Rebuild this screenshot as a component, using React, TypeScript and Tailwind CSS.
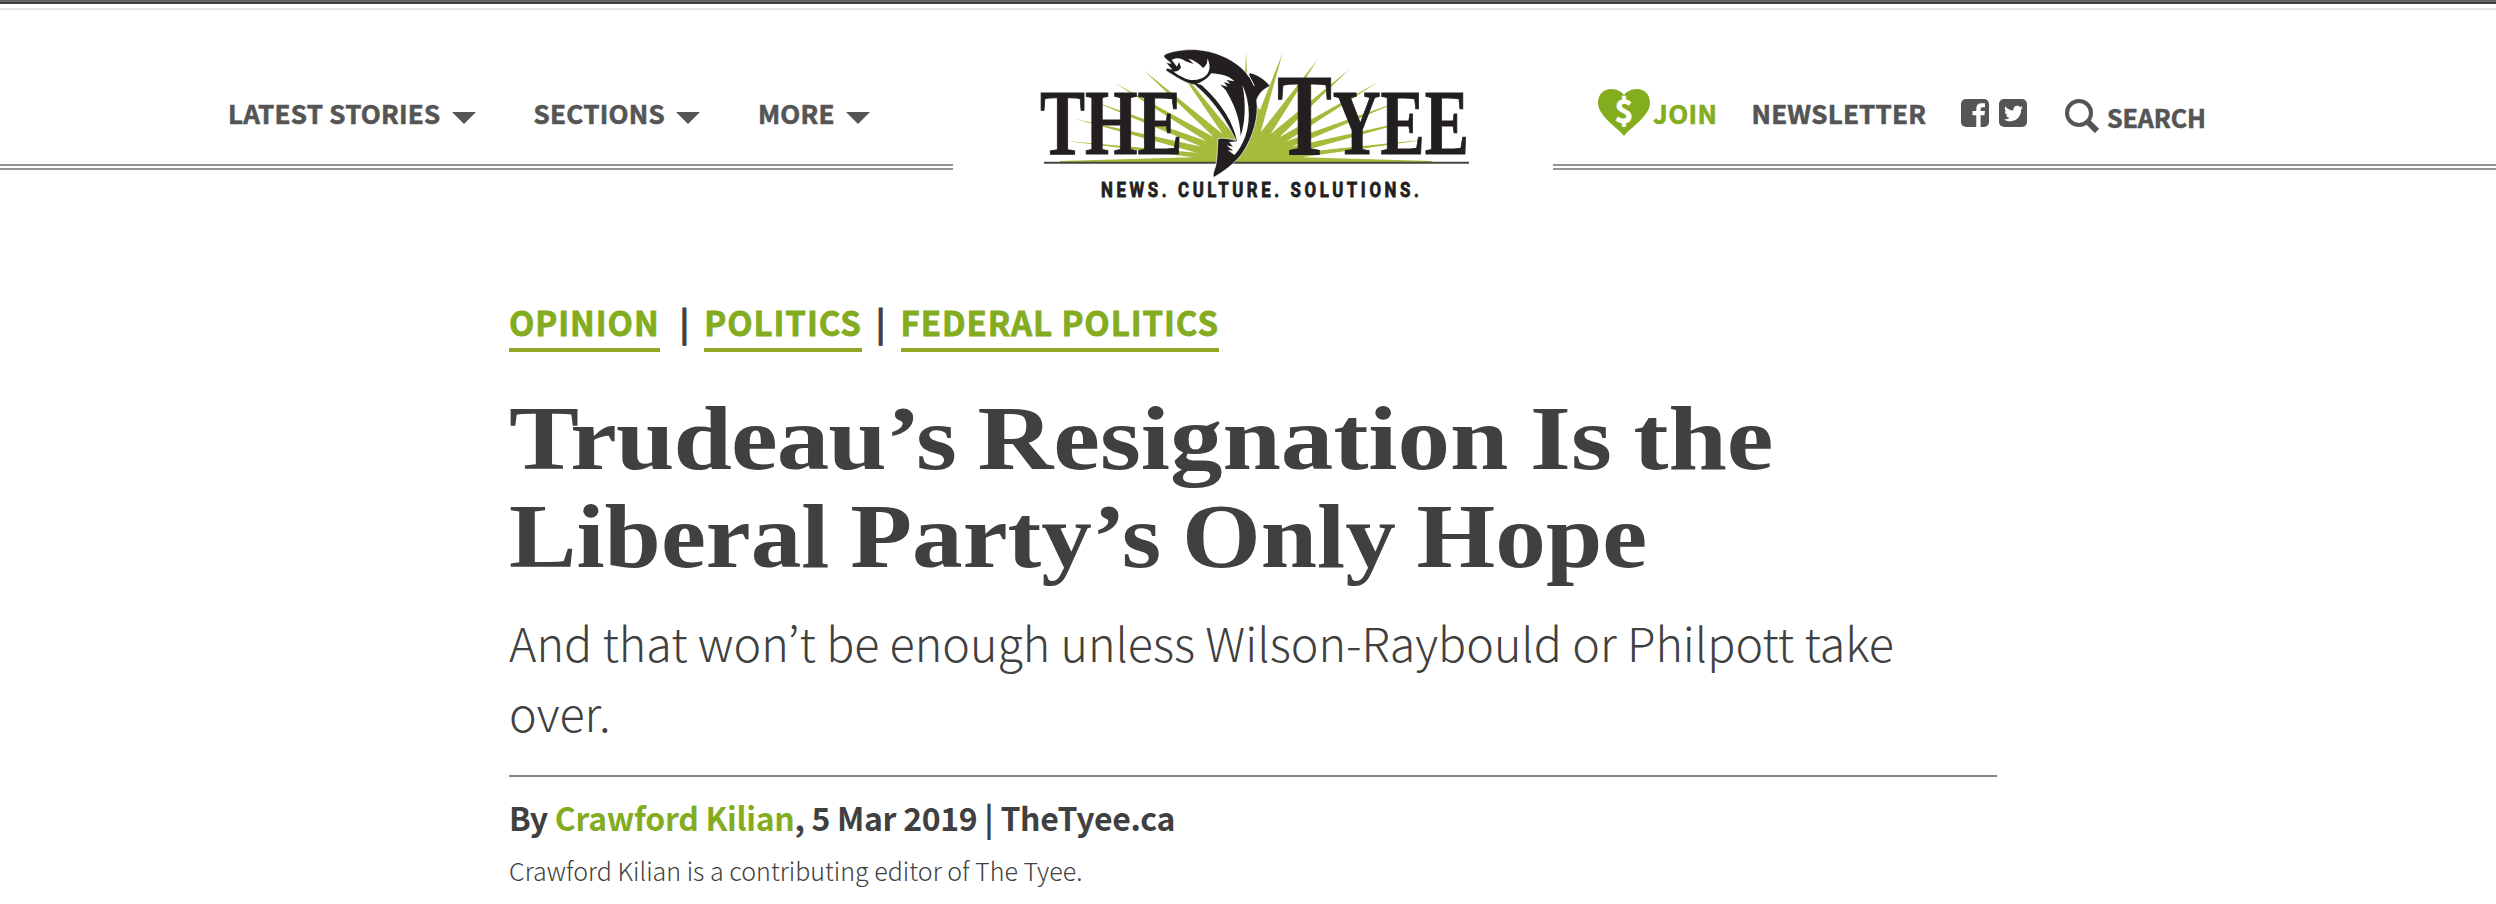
import React from 'react';
import { FaTwitter } from 'react-icons/fa';

const menus = ['LATEST STORIES', 'SECTIONS', 'MORE'];

const Logo = () => (
  <svg viewBox="60 45 1290 480" className="w-[430px] h-[160px] overflow-visible" aria-label="The Tyee">
    <path
      fill="#a4bb3c"
      d="M120 393L520 382L135 332L530 368L163 266L545 350L217 212L560 334L283 158L582 322L370 120L608 312L455 88L650 325L672 240L678 62L684 200L720 240L788 68L722 307L893 88L752 312L988 118L778 322L1073 157L800 334L1143 212L815 350L1195 266L830 368L1225 328L845 382L1235 393L1235 398L120 398Z"
    />
    <path d="M72 398.500H1347" stroke="#45453f" strokeWidth="6" />
    <g fontFamily="Liberation Serif, serif" fontWeight="700" fill="#231f20" stroke="#231f20" strokeWidth="3">
      <text x="60" y="371" fontSize="281" textLength="428" lengthAdjust="spacingAndGlyphs">THE</text>
      <text x="771" y="371" fontSize="352" textLength="165" lengthAdjust="spacingAndGlyphs">T</text>
      <text x="938" y="371" fontSize="281" textLength="409" lengthAdjust="spacingAndGlyphs">YEE</text>
    </g>
    <g transform="translate(405 30)">
      <path
        fill="#231f20"
        stroke="#fff"
        strokeWidth="2"
        d="M27 45C50 32 90 28 125 29C180 33 225 55 255 80C268 91 276 100 281 110L283 98C305 102 330 118 346 138C325 147 312 160 305 180C312 230 295 290 262 340C235 375 205 395 177 412C172 408 176 395 182 378C188 350 187 320 189 296C205 292 225 297 243 301C215 245 180 185 120 135C90 130 65 112 33 92L34 84L50 88L33 68L48 70L27 52Z"
      />
      <path
        fill="#fff"
        d="M50 60C62 52 78 52 92 64L116 72L100 56C118 60 132 70 144 84C152 80 158 70 157 55C167 75 166 92 154 106C140 120 112 124 92 116C76 110 62 100 54 94C64 96 74 92 78 82L72 66L66 80Z"
      />
      <path
        fill="#fff"
        d="M168 100C195 102 222 106 238 124L214 120L226 132L206 126L218 140L196 134L212 150C235 190 255 230 257 288C270 250 274 190 262 134C288 190 288 260 262 310C255 325 246 338 238 345L218 330L234 332L215 316L234 320L222 306L246 304C236 250 200 190 145 140C139 134 132 131 124 132C146 124 160 114 168 100Z"
      />
      <path d="M282 106C288 118 292 128 298 138" stroke="#fff" strokeWidth="3" fill="none" />
    </g>
    <g transform="translate(243 502) scale(0.8 1)">
      <text
        fontFamily="Roboto, sans-serif"
        fontWeight="700"
        fontSize="63"
        fill="#231f20"
        stroke="#231f20"
        strokeWidth="2.500"
        textLength="1192"
      >
        NEWS. CULTURE. SOLUTIONS.
      </text>
    </g>
  </svg>
);

const HeartIcon = () => (
  <svg viewBox="0 0 52 47" className="w-[52px] h-[47px]">
    <path fill="#83ac1f" d="M26 47C20 39 0 27 0 14C0 5 6 0 13 0C19 0 24 3 26 6C28 3 33 0 39 0C46 0 52 5 52 14C52 27 32 39 26 47Z" />
    <text x="26" y="34" textAnchor="middle" fontFamily="Noto Sans CJK KR, sans-serif" fontWeight="700" fontSize="32" fill="#fff" stroke="#fff" strokeWidth="0.600">
      $
    </text>
  </svg>
);

const FacebookIcon = () => (
  <svg viewBox="0 0 28 28" className="w-[28px] h-[28px]">
    <rect width="28" height="28" rx="5" fill="#555" />
    <path fill="#fff" d="M15.300 28V16.200H11.500V12H15.300V9.500C15.300 6 17.300 4.200 20.500 4.200H24V8.300H21.600C20.100 8.300 19.600 9 19.600 10.200V12H24L23.400 16.200H19.600V28Z" />
  </svg>
);

const SearchIcon = () => (
  <svg viewBox="0 0 34 34" className="w-[34px] h-[34px]" fill="none" stroke="#555">
    <circle cx="14" cy="14" r="12" strokeWidth="4" />
    <path d="M22.500 22.500L32 32" strokeWidth="6" />
  </svg>
);

const Header = () => (
  <header>
    <div className="h-[4px] bg-[#404040] border-t-2 border-[#666]" />
    <div className="mt-1 h-[2px] bg-[#e6e6e6]" />
    <div className="flex justify-between h-[160px] font-bold text-[26px] leading-[28px] text-[#555]">
      <nav className="w-[953px] border-b-[6px] border-double border-[#949494] pl-[228px] pt-[89px] flex items-start gap-[58px] tracking-[0.24px] [-webkit-text-stroke:0.6px]">
        {menus.map((menu) => (
          <a key={menu} className="flex items-center gap-[11px] whitespace-nowrap">
            {menu}
            <svg viewBox="0 0 24 12" className="w-[24px] h-[12px] mt-[9px]">
              <path d="M0 0H24L12 12Z" fill="#555" />
            </svg>
          </a>
        ))}
      </nav>
      <div className="pt-[35px] pl-[3px]">
        <Logo />
      </div>
      <div className="w-[943px] border-b-[6px] border-double border-[#949494] pl-[45px] flex items-start">
        <a className="flex items-start text-[#83ac1f]">
          <span className="mt-[79px]"><HeartIcon /></span>
          <span className="mt-[89px] ml-[3px] tracking-[0.4px] [-webkit-text-stroke:0.6px]">JOIN</span>
        </a>
        <a className="mt-[89px] ml-[34px] tracking-[0.2px] [-webkit-text-stroke:0.6px]">NEWSLETTER</a>
        <div className="flex gap-[10px] mt-[89px] ml-[35px]">
          <FacebookIcon />
          <span className="w-[28px] h-[28px] rounded-[5px] bg-[#555] flex items-center justify-center">
            <FaTwitter className="w-[19px] h-[19px] text-white" />
          </span>
        </div>
        <a className="flex items-start ml-[38px] mt-[89px] text-[25px]">
          <SearchIcon />
          <span className="ml-[8px] mt-[4px] tracking-[-0.1px] [-webkit-text-stroke:0.6px]">SEARCH</span>
        </a>
      </div>
    </div>
  </header>
);

const App = () => (
  <div className="min-h-[904px] bg-white overflow-hidden font-['Noto_Sans_CJK_KR',sans-serif] text-[#404040]">
    <Header />
    <article className="ml-[509px] w-[1488px] pt-[132px]">
      <div className="flex items-start font-bold text-[33px] leading-[40px] tracking-[0.93px] text-[#83ac1f] [-webkit-text-stroke:0.8px]">
        <a className="pb-[6px] border-b-4 border-[#92a825]">OPINION</a>
        <span className="ml-[20px] mr-[14px] text-[#404040]">|</span>
        <a className="pb-[6px] border-b-4 border-[#92a825]">POLITICS</a>
        <span className="mx-[14px] text-[#404040]">|</span>
        <a className="pb-[6px] border-b-4 border-[#92a825]">FEDERAL POLITICS</a>
      </div>
      <h1 className="mt-[38px] font-['Liberation_Serif',serif] font-bold text-[91px] leading-[98px] whitespace-nowrap [word-spacing:-4px]">
        <span className="block origin-left scale-x-[1.154]">
          <span className="tracking-[-0.8px]">Trudeau’s</span> Resignation Is the
        </span>
        <span className="block origin-left scale-x-[1.112]">Liberal Party’s Only Hope</span>
      </h1>
      <p className="mt-[21px] pb-[28px] border-b-2 border-[#868686] font-light text-[46.6px] leading-[70px]">
        And that won’t be enough unless Wilson-Raybould or Philpott take over.
      </p>
      <p className="mt-[20px] font-bold text-[32px] leading-[40px] tracking-[-0.32px]">
        By <a className="text-[#83ac1f]">Crawford Kilian</a>, 5 Mar 2019 | TheTyee.ca
      </p>
      <p className="mt-[15px] font-light text-[25px] leading-[36px] tracking-[0.02px]">Crawford Kilian is a contributing editor of The Tyee.</p>
    </article>
  </div>
);

export default App;
